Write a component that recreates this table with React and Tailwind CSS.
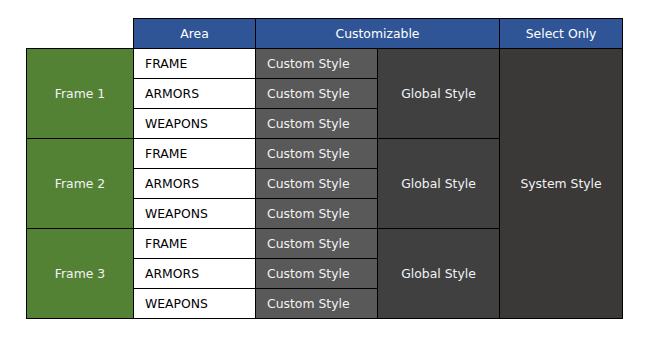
const frames = ["Frame 1", "Frame 2", "Frame 3"];
const parts = ["FRAME", "ARMORS", "WEAPONS"];

export default function App() {
  return (
    <div className="w-[647px] h-[343px] bg-white pt-[18px] pl-[26px]" style={{ fontFamily: '"DejaVu Sans", Verdana, sans-serif' }}>
      <table className="table-fixed border-collapse text-[12.4px] w-[596px]">
        <colgroup>
          <col className="w-[107px]" />
          <col className="w-[122px]" />
          <col className="w-[122px]" />
          <col className="w-[122px]" />
          <col className="w-[123px]" />
        </colgroup>
        <thead>
          <tr className="h-[30px]">
            <th className="p-0"></th>
            <th className="border border-black bg-[#2f5597] text-white font-normal pt-[2px]">Area</th>
            <th colSpan={2} className="border border-black bg-[#2f5597] text-white font-normal pt-[2px]">Customizable</th>
            <th className="border border-black bg-[#2f5597] text-white font-normal pt-[2px]">Select Only</th>
          </tr>
        </thead>
        <tbody>
          {frames.map((f, fi) =>
            parts.map((p, pi) => (
              <tr key={f + p} className="h-[30px]">
                {pi === 0 && (
                  <td rowSpan={3} className="border border-black bg-[#548235] text-[#f2f2f2] text-center pt-[2px]">{f}</td>
                )}
                <td className="border border-black bg-white text-black pl-[11px] pt-[2px]">{p}</td>
                <td className="border border-black bg-[#595959] text-[#f2f2f2] pl-[11px] pt-[2px]">Custom Style</td>
                {pi === 0 && (
                  <td rowSpan={3} className="border border-black bg-[#404040] text-[#f2f2f2] text-center pt-[2px]">Global Style</td>
                )}
                {fi === 0 && pi === 0 && (
                  <td rowSpan={9} className="border border-black bg-[#3b3838] text-[#f2f2f2] text-center pt-[2px]">System Style</td>
                )}
              </tr>
            ))
          )}
        </tbody>
      </table>
    </div>
  );
}
